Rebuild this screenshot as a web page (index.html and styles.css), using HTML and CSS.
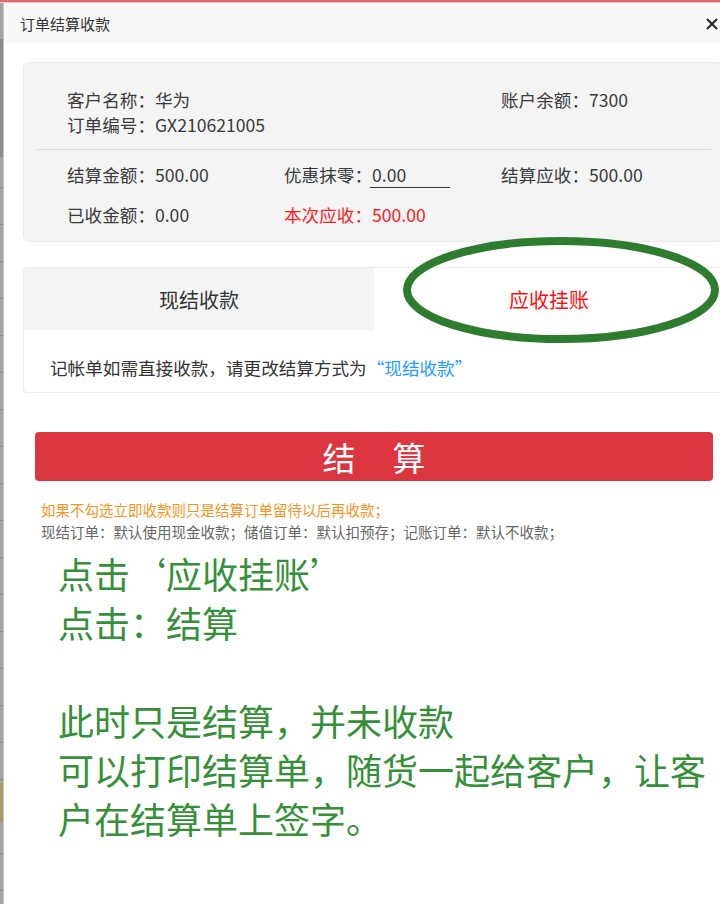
FILE: index.html
```html
<!DOCTYPE html>
<html lang="zh-CN">
<head>
    <meta charset="UTF-8">
    <title>订单结算收款</title>
    <link rel="stylesheet" href="styles.css">
</head>
<body>
    <div class="top-line"></div>
    <div class="screen">
        <div class="backdrop"></div>

        <div class="dialog">
            <div class="dialog-head">
                <span>订单结算收款</span>
                <svg class="close" width="12" height="12" viewBox="0 0 12 12">
                    <path d="M1 1 L11 11 M11 1 L1 11" stroke="#222" stroke-width="2" fill="none"/>
                </svg>
            </div>

            <div class="dialog-body">
                <!-- 订单信息 -->
                <div class="summary">
                    <div class="summary-top">
                        <div>客户名称：华为</div>
                        <div></div>
                        <div>账户余额：7300</div>
                        <div>订单编号：GX210621005</div>
                    </div>
                    <div class="summary-bottom">
                        <div>结算金额：500.00</div>
                        <div class="discount">优惠抹零：<input type="text" value="0.00"></div>
                        <div>结算应收：500.00</div>
                        <div>已收金额：0.00</div>
                        <div class="due">本次应收：500.00</div>
                    </div>
                </div>

                <!-- 结算方式 -->
                <div class="pay-tabs">
                    <div class="tab-head">
                        <div class="tab off">现结收款</div>
                        <div class="tab on">应收挂账</div>
                    </div>
                    <div class="tab-body">
                        记帐单如需直接收款，请更改结算方式为<a class="link">“现结收款”</a>
                    </div>
                    <svg class="circle-mark" width="330" height="112" viewBox="0 0 330 112">
                        <ellipse cx="162" cy="54" rx="154" ry="49" fill="none" stroke="#2e7d2e" stroke-width="8"/>
                    </svg>
                </div>

                <div class="settle">
                    <button class="btn-settle">结算</button>
                    <div class="hint warn">如果不勾选立即收款则只是结算订单留待以后再收款；</div>
                    <div class="hint">现结订单：默认使用现金收款；储值订单：默认扣预存；记账订单：默认不收款；</div>
                </div>

                <div class="notes">
                    <p>点击‘应收挂账’<br>点击：结算</p>
                    <p>此时只是结算，并未收款<br>可以打印结算单，随货一起给客户，让客户在结算单上签字。</p>
                </div>
            </div>
        </div>
    </div>
</body>
</html>
```

FILE: styles.css
```css
html, body {
    margin: 0;
    height: 100%;
    overflow: hidden;
    background: #fff;
    font-family: "Noto Sans CJK SC", sans-serif;
    color: #333;
}
.top-line {
    height: 2px;
    background: #e06a6a;
    border-bottom: 1px solid #d4d4d4;
}
.screen {
    display: flex;
    height: calc(100% - 3px);
}
.backdrop {
    width: 3px;
    flex-shrink: 0;
    background:
        linear-gradient(to bottom, transparent 780px, #a89a5c 780px 819px, transparent 819px),
        linear-gradient(to bottom, transparent 37px, #8c8c8c 37px 154px, transparent 154px),
        repeating-linear-gradient(to bottom, #a4a4a4 0 36px, #8a8a8a 36px 37px);
}
.dialog {
    width: 740px;
    flex-shrink: 0;
    border-left: 1px solid #c4c4c4;
}
.dialog-head {
    height: 39px;
    padding: 2px 26px 0 16px;
    background: #f8f8f8;
    display: flex;
    align-items: center;
    justify-content: space-between;
    font-size: 15px;
    color: #333;
    box-sizing: border-box;
}
.dialog-body {
    padding: 20px 19px 0 19px;
}

/* 订单信息卡片 */
.summary {
    background: #f4f4f4;
    border: 1px solid #ebebeb;
    border-radius: 6px;
    padding: 0 13px;
    font-size: 17.6px;
    line-height: 25px;
    color: #3a3a3a;
}
.summary-top, .summary-bottom {
    display: grid;
    grid-template-columns: repeat(3, 217px);
    padding-left: 30px;
}
.summary-top {
    padding-top: 24px;
    padding-bottom: 12px;
    border-bottom: 1px solid #dcdcdc;
}
.summary-bottom {
    padding-top: 12px;
    padding-bottom: 14px;
    row-gap: 14px;
}
.discount input {
    width: 80px;
    height: 26px;
    padding: 0 2px;
    margin: 0 0 0 -2px;
    border: none;
    border-bottom: 1px solid #333;
    background: transparent;
    font: inherit;
    color: #3a3a3a;
    vertical-align: top;
    box-sizing: border-box;
}
.due {
    color: #ff2020;
}

/* 结算方式 */
.pay-tabs {
    position: relative;
    margin-top: 25px;
    border: 1px solid #eeeeee;
    border-radius: 4px;
}
.tab-head {
    display: grid;
    grid-template-columns: 1fr 1fr;
    height: 62px;
}
.tab {
    display: flex;
    align-items: center;
    justify-content: center;
    font-size: 20px;
}
.tab.off {
    background: #f4f4f4;
    color: #333;
}
.tab.on {
    color: #ff1010;
}
.tab-body {
    padding: 26px 26px 12px;
    font-size: 17.6px;
    line-height: 24px;
    color: #333;
}
.link {
    color: #1e9fff;
}
.circle-mark {
    position: absolute;
    left: 375px;
    top: -32px;
    pointer-events: none;
}

/* 结算按钮 */
.settle {
    margin-top: 39px;
    padding: 0 12px;
}
.btn-settle {
    display: block;
    width: 100%;
    height: 49px;
    border: none;
    border-radius: 4px;
    background: #dc3741;
    color: #fff;
    font-family: inherit;
    font-size: 33px;
    letter-spacing: 37px;
    text-indent: 37px;
    cursor: pointer;
}
.hint {
    padding-left: 6px;
    font-size: 14.5px;
    line-height: 22px;
    color: #666;
}
.hint.warn {
    margin-top: 18px;
    color: #f7941d;
}

/* 操作说明 */
.notes {
    margin-top: 6px;
    padding-left: 35px;
    font-size: 36px;
    line-height: 49px;
    color: #36903a;
}
.notes p {
    margin: 0 0 49px;
}
```
